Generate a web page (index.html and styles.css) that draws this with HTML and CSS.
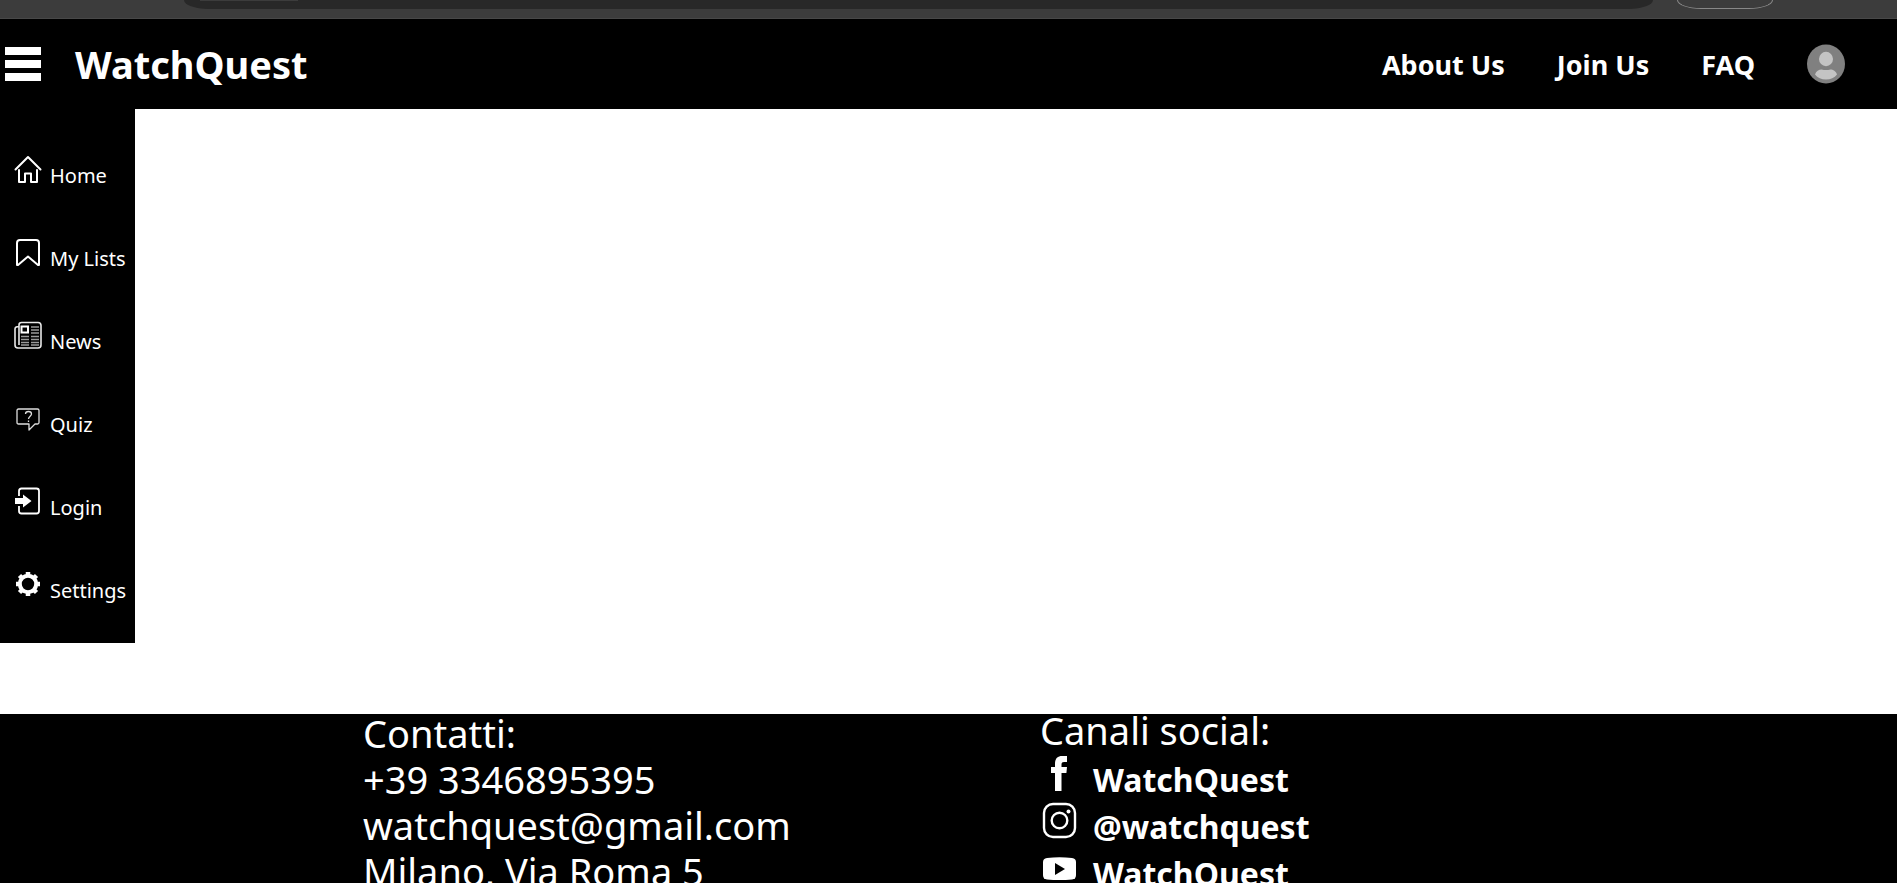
FILE: index.html
```html
<!DOCTYPE html>
<html lang="it">
<head>
<meta charset="utf-8">
<title>WatchQuest</title>
<link rel="stylesheet" href="styles.css">
</head>
<body>
<div class="browser-bar">
  <div class="address"><span class="chip"></span></div>
  <div class="bar-button"></div>
</div>
<header class="header">
  <button class="menu" aria-label="Menu"><span></span><span></span><span></span></button>
  <a class="logo" href="#">WatchQuest</a>
  <nav class="nav">
    <a href="#">About Us</a>
    <a href="#">Join Us</a>
    <a href="#">FAQ</a>
    <a class="profile" href="#" aria-label="Profile">
      <svg viewBox="0 0 38 40"><ellipse cx="19" cy="20" rx="19" ry="19.500" fill="#808080"/><ellipse cx="19" cy="15" rx="7" ry="7.200" fill="#c4c4c4"/><path d="M8 30.500C9 27 12 25.500 14.500 25.500c3 .8 6 .8 9 0 2.500 0 5.500 1.500 6.500 5-2.500 3.500-6.500 5-11 5s-8.500-1.500-11-5z" fill="#c4c4c4"/></svg>
    </a>
  </nav>
</header>
<div class="body">
  <aside class="sidebar">
    <a href="#"><svg viewBox="0 0 28 28"><g fill="none" stroke="#fff" stroke-width="2" stroke-linejoin="round" stroke-linecap="round"><path d="M1.500 14.500 14 2l12.500 12.500"/><path d="M5 15v12h6v-8.500h6V27h6V15"/></g></svg><span>Home</span></a>
    <a href="#"><svg viewBox="0 0 28 28"><path d="M6 2h16q3 0 3 3v22h-1L14 18.500 4 27H3V5q0-3 3-3z" fill="none" stroke="#fff" stroke-width="2" stroke-linejoin="round"/></svg><span>My Lists</span></a>
    <a href="#"><svg viewBox="0 0 28 28"><g fill="none" stroke="#e8e8e8" stroke-width="1.600"><path d="M5 24V4q0-2.500 2.500-2.500H24q3 0 3 3V24q0 3-3 3H4q-3 0-3-3V8q0-2.500 4-2.500"/><rect x="7.500" y="5.500" width="6.500" height="6" stroke="#fff" stroke-width="2"/></g><path d="M17 6h8M17 9h8M17 12h8M7 15.500h8M17 15.500h8M7 18.500h8M17 18.500h8M7 21.500h8M17 21.500h8M7 24h8M17 24h8" stroke="#999" stroke-width="1.500"/></svg><span>News</span></a>
    <a href="#"><svg viewBox="0 0 28 28"><g fill="none" stroke="#ddd" stroke-width="1.300" stroke-linejoin="round"><path d="M4.500 5h19q1.500 0 1.500 1.500v12q0 1.500-1.500 1.500H21l-6 6v-6H4.500Q3 20 3 18.500v-12Q3 5 4.500 5z"/><path d="M11.500 10q0-2.500 3-2.500t3 2.500c0 2-3 2.500-3 5M14.500 16.500V18"/></g></svg><span>Quiz</span></a>
    <a href="#"><svg viewBox="0 0 28 28"><path d="M5 9V4q0-2.500 2.500-2.500h15Q25 1.500 25 4v20q0 2.500-2.500 2.500h-15Q5 26.500 5 24v-5" fill="none" stroke="#fff" stroke-width="1.800"/><path d="M1 11h8V7.500l8.500 6.500L9 20.500V17H1z" fill="#fff"/></svg><span>Login</span></a>
    <a href="#"><svg viewBox="0 0 28 28"><circle cx="14" cy="14" r="8.200" fill="none" stroke="#fff" stroke-width="4"/><path d="M14 2v4M14 22v4M2 14h4M22 14h4M5.500 5.500l3 3M19.500 19.500l3 3M22.500 5.500l-3 3M8.500 19.500l-3 3" stroke="#fff" stroke-width="4.500" stroke-linejoin="round"/></svg><span>Settings</span></a>
  </aside>
  <main class="content"></main>
</div>
<footer class="footer">
  <address class="contacts">
    <div class="contacts-title">Contatti:</div>
    <div>+39 3346895395</div>
    <div>watchquest@gmail.com</div>
    <div>Milano, Via Roma 5</div>
  </address>
  <div class="social">
    <div class="social-title">Canali social:</div>
    <a href="#"><svg viewBox="0 0 38 38"><path d="M15 36V18h-4v-6h4V9c0-6 3-8 7-8h5v6h-3c-2 0-2.500 1-2.500 2.500V12H27l-.6 6h-4.900v18z" fill="#fff"/></svg><span>WatchQuest</span></a>
    <a href="#"><svg viewBox="0 0 38 38"><g fill="none" stroke="#fff" stroke-width="2.400"><rect x="4" y="2" width="31" height="33" rx="9"/><circle cx="19.500" cy="18.500" r="7.800"/></g><circle cx="28.500" cy="9.500" r="2" fill="#fff"/></svg><span>@watchquest</span></a>
    <a href="#"><svg viewBox="0 0 38 38"><path d="M7 9q12.500-1.500 25 0 4 .5 4 4v13q0 4-4 4.500-12.500 1-25 0-4-.5-4-4.500V13q0-3.500 4-4z" fill="#fff"/><path d="M15 14v12l10-6z" fill="#000"/></svg><span>WatchQuest</span></a>
  </div>
</footer>
</body>
</html>
```
FILE: styles.css
```css
* { box-sizing: border-box; }
body {
  margin: 0;
  height: 100vh;
  overflow: hidden;
  display: flex;
  flex-direction: column;
  background: #fff;
  color: #fff;
  font-family: "Noto Sans", "Open Sans", sans-serif;
}
a { color: inherit; text-decoration: none; }
svg { display: block; flex: none; }

.browser-bar {
  flex: none;
  display: flex;
  gap: 24px;
  height: 19px;
  padding: 0 124px 0 184px;
  background: #3c3c3c;
  border-bottom: 1px solid #484848;
}
.address {
  flex: 1;
  height: 9px;
  padding-left: 16px;
  background: #282828;
  border-radius: 0 0 24px 24px / 0 0 9px 9px;
}
.chip {
  display: block;
  width: 98px;
  height: 1px;
  background: #3c3c3c;
}
.bar-button {
  width: 96px;
  height: 9px;
  border: 1px solid #888;
  border-top: 0;
  border-radius: 0 0 24px 24px / 0 0 9px 9px;
}

.header {
  flex: none;
  display: flex;
  align-items: center;
  height: 90px;
  padding: 0 52px 0 5px;
  background: #000;
}
.menu {
  display: flex;
  flex-direction: column;
  gap: 5px;
  width: 36px;
  padding: 0;
  border: 0;
  background: none;
}
.menu span { height: 8px; background: #fff; }
.logo {
  margin-left: 34px;
  font-size: 38px;
  line-height: 48px;
  font-weight: 700;
}
.nav {
  display: flex;
  align-items: center;
  gap: 52px;
  margin-left: auto;
  font-size: 27px;
  font-weight: 700;
}
.profile svg { width: 38px; height: 40px; }

.body {
  flex: none;
  display: flex;
  padding-bottom: 71px;
}
.sidebar {
  display: flex;
  flex-direction: column;
  gap: 51px;
  width: 135px;
  padding: 46px 0 41px 14px;
  background: #000;
  font-size: 20px;
  line-height: 32px;
}
.sidebar a {
  display: flex;
  align-items: flex-start;
  gap: 8px;
  height: 32px;
  white-space: nowrap;
}
.sidebar svg { width: 28px; height: 28px; }
.sidebar span { padding-top: 5px; }
.content { flex: 1; }

.footer {
  flex: 1 0 auto;
  display: flex;
  padding-left: 363px;
  background: #000;
  font-size: 38px;
  line-height: 46px;
}
.contacts {
  width: 677px;
  font-style: normal;
}
.contacts-title {
  margin-bottom: 4px;
  line-height: 38px;
}
.social-title {
  margin-bottom: 7px;
  line-height: 32px;
}
.social a {
  display: flex;
  gap: 15px;
  height: 47px;
  font-size: 32px;
  font-weight: 700;
}
.social svg { width: 38px; height: 38px; margin-top: 2px; }
.social span { padding-top: 4px; }
```
